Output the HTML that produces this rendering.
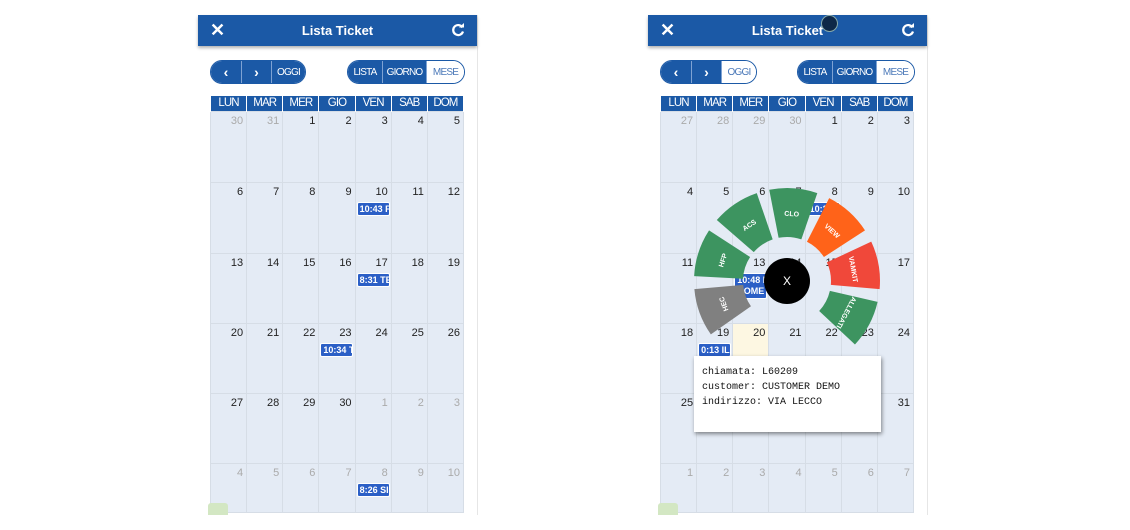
<!DOCTYPE html>
<html><head><meta charset="utf-8"><style>
*{margin:0;padding:0;box-sizing:border-box}
body{width:1130px;height:530px;background:#fff;position:relative;overflow:hidden;font-family:"Liberation Sans",Arial,sans-serif}
.ph{position:absolute;top:15px;width:280px;height:500px;background:#fff;border-right:1px solid #e6e6e6}
.hd{position:absolute;left:0;top:0;width:279px;height:31px;background:#1b59a6;color:#fff;box-shadow:0 2px 3px rgba(0,0,0,.3)}
.hd .t{position:absolute;left:0;right:0;top:8px;text-align:center;font-weight:bold;font-size:13px}
.hd .x{position:absolute;left:12px;top:5px;font-size:18px;font-weight:bold}
.hd svg{position:absolute;right:12px;top:8px}
.bg{position:absolute;top:45px;height:24px;border:1px solid #1b59a6;border-radius:12px;overflow:hidden;display:flex}
.bg div{height:100%;background:#1b59a6;color:#fff;font-size:10px;letter-spacing:-.8px;display:flex;align-items:center;justify-content:center;border-left:1px solid #7ea2d3}
.bg div.a{font-size:14px;font-weight:bold;letter-spacing:0}
.bg div:first-child{border-left:none}
.bg div.w{background:#fff;color:#4a78b8}
table{position:absolute;left:12px;top:81px;width:254px;border-collapse:collapse;table-layout:fixed}
th{background:#1b59a6;color:#fff;font-size:11.5px;font-weight:normal;letter-spacing:-.9px;height:15px;border-left:1px solid #fff;border-right:1px solid #fff}
td{background:#e4ebf5;border:1px solid #d6dde6;vertical-align:top;text-align:right;font-size:11px;color:#222;padding:3px 3px 0 0;position:relative}
td.g{color:#aaa}
td.y{background:#fdf7e2}
tr.r td{height:71px}tr.s td{height:70px}tr.l td{height:49px}
.ev{position:absolute;left:1px;background:#2b5fc6;color:#fff;font-size:9px;font-weight:bold;text-align:left;padding:1px 2px;border:1px solid #fff;border-radius:2px;width:33px;white-space:nowrap;overflow:hidden;line-height:10px}
.gr{position:absolute;left:10px;top:488px;width:20px;height:12px;background:#d3e7c3;border-radius:3px 3px 0 0}
.pop{position:absolute;left:694px;top:356px;width:187px;height:76px;background:#fff;box-shadow:1px 2px 4px rgba(0,0,0,.45);font-family:"Liberation Mono",monospace;font-size:10px;color:#111;padding:9px 8px;line-height:15px}
</style></head><body>

<div class="ph" style="left:198px">
 <div class="hd"><div class="x">✕</div><div class="t">Lista Ticket</div>
 <svg width="14" height="14" viewBox="0 0 14 14"><path d="M11.5 4.5A5 5 0 1 0 12 8.5" fill="none" stroke="#fff" stroke-width="2.2"/><path d="M8 4.5h5V0z" fill="#fff"/></svg></div>
 <div class="bg" style="left:12px;width:96px"><div class="a" style="width:30px">‹</div><div class="a" style="width:30px">›</div><div style="width:34px">OGGI</div></div>
 <div class="bg" style="left:149px;width:118px"><div style="width:34px">LISTA</div><div style="width:44px">GIORNO</div><div class="w" style="width:38px">MESE</div></div>
 <table>
 <tr><th>LUN</th><th>MAR</th><th>MER</th><th>GIO</th><th>VEN</th><th>SAB</th><th>DOM</th></tr>
 <tr class="r"><td class="g">30</td><td class="g">31</td><td>1</td><td>2</td><td>3</td><td>4</td><td>5</td></tr>
 <tr class="r"><td>6</td><td>7</td><td>8</td><td>9</td><td>10<div class="ev" style="top:19px">10:43 F</div></td><td>11</td><td>12</td></tr>
 <tr class="s"><td>13</td><td>14</td><td>15</td><td>16</td><td>17<div class="ev" style="top:19px">8:31 TE</div></td><td>18</td><td>19</td></tr>
 <tr class="s"><td>20</td><td>21</td><td>22</td><td>23<div class="ev" style="top:19px">10:34 T</div></td><td>24</td><td>25</td><td>26</td></tr>
 <tr class="s"><td>27</td><td>28</td><td>29</td><td>30</td><td class="g">1</td><td class="g">2</td><td class="g">3</td></tr>
 <tr class="l"><td class="g">4</td><td class="g">5</td><td class="g">6</td><td class="g">7</td><td class="g">8<div class="ev" style="top:19px">8:26 SI</div></td><td class="g">9</td><td class="g">10</td></tr>
 </table>
 <div class="gr"></div>
</div>

<div class="ph" style="left:648px">
 <div class="hd"><div class="x">✕</div><div class="t">Lista Ticket</div>
 <svg width="14" height="14" viewBox="0 0 14 14"><path d="M11.5 4.5A5 5 0 1 0 12 8.5" fill="none" stroke="#fff" stroke-width="2.2"/><path d="M8 4.5h5V0z" fill="#fff"/></svg></div>
 <div style="position:absolute;left:173px;top:0;width:17px;height:17px;border-radius:50%;background:#0e2848;border:1px solid #8aa"></div>
 <div class="bg" style="left:12px;width:97px"><div class="a" style="width:30px">‹</div><div class="a" style="width:30px">›</div><div class="w" style="width:35px">OGGI</div></div>
 <div class="bg" style="left:149px;width:118px"><div style="width:34px">LISTA</div><div style="width:44px">GIORNO</div><div class="w" style="width:38px">MESE</div></div>
 <table>
 <tr><th>LUN</th><th>MAR</th><th>MER</th><th>GIO</th><th>VEN</th><th>SAB</th><th>DOM</th></tr>
 <tr class="r"><td class="g">27</td><td class="g">28</td><td class="g">29</td><td class="g">30</td><td>1</td><td>2</td><td>3</td></tr>
 <tr class="r"><td>4</td><td>5</td><td>6</td><td>7</td><td>8<div class="ev" style="top:19px">10:26 F</div></td><td>9</td><td>10</td></tr>
 <tr class="s"><td>11</td><td>12</td><td>13<div class="ev" style="top:19px;line-height:11px">10:48 E<br>HOME</div></td><td>14</td><td>15</td><td>16</td><td>17</td></tr>
 <tr class="s"><td>18</td><td>19<div class="ev" style="top:19px">0:13 IL</div></td><td class="y">20</td><td>21</td><td>22</td><td>23</td><td>24</td></tr>
 <tr class="s"><td>25</td><td>26</td><td>27</td><td>28</td><td>29</td><td>30</td><td>31</td></tr>
 <tr class="l"><td class="g">1</td><td class="g">2</td><td class="g">3</td><td class="g">4</td><td class="g">5</td><td class="g">6</td><td class="g">7</td></tr>
 </table>
 <div class="gr"></div>
</div>

<svg style="position:absolute;left:0;top:0" width="1130" height="530">
 <defs><path id="w" d="M89.8,-24.1 A93,93 0 0 1 89.8,24.1 L42.5,11.4 A44,44 0 0 0 42.5,-11.4 Z"/></defs>
 <g transform="translate(787,281)" font-family="Liberation Sans,Arial,sans-serif" font-size="7" font-weight="bold" fill="#fff" text-anchor="middle">
  <use href="#w" transform="rotate(-200)" fill="#808080"/>
  <use href="#w" transform="rotate(-162)" fill="#3d9460"/>
  <use href="#w" transform="rotate(-124)" fill="#3d9460"/>
  <use href="#w" transform="rotate(-86)" fill="#3d9460"/>
  <use href="#w" transform="rotate(-48)" fill="#ff6319"/>
  <use href="#w" transform="rotate(-10)" fill="#f0483a"/>
  <use href="#w" transform="rotate(28)" fill="#3d9460"/>
  <g transform="rotate(-200) translate(68,0) rotate(90)"><text y="3">HEC</text></g>
  <g transform="rotate(-162) translate(68,0) rotate(90)"><text y="3">HFP</text></g>
  <g transform="rotate(-124) translate(68,0) rotate(90)"><text y="3">ACS</text></g>
  <g transform="rotate(-86) translate(68,0) rotate(90)"><text y="3">CLO</text></g>
  <g transform="rotate(-48) translate(68,0) rotate(90)"><text y="3">VIEW</text></g>
  <g transform="rotate(-10) translate(68,0) rotate(90)"><text y="3">VAMKIT</text></g>
  <g transform="rotate(28) translate(68,0) rotate(90)"><text y="3">ALLEGATI</text></g>
  <circle r="23" fill="#000"/>
  <text y="4" font-size="12" font-weight="normal">X</text>
 </g>
</svg>

<div class="pop">chiamata: L60209<br>customer: CUSTOMER DEMO<br>indirizzo: VIA LECCO</div>
</body></html>
